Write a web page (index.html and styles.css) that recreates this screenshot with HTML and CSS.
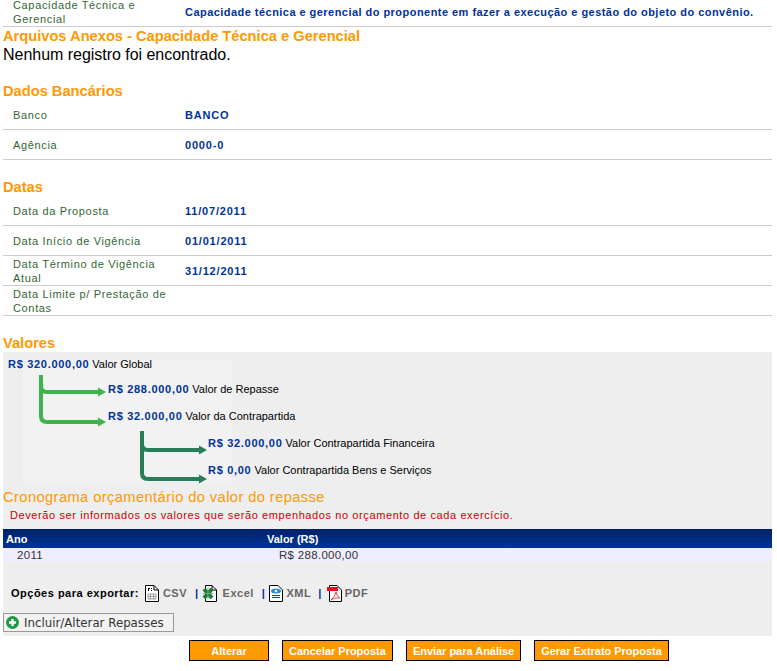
FILE: index.html
```html
<!DOCTYPE html>
<html lang="pt-BR">

<head>
  <meta charset="UTF-8">
  <title>Proposta</title>
  <link rel="stylesheet" href="styles.css">
</head>

<body>
  <div class="page">
    <div class="row row-first">
      <div class="label">Capacidade Técnica e Gerencial</div>
      <div class="value value-long">Capacidade técnica e gerencial do proponente em fazer a execução e gestão do objeto do convênio.</div>
    </div>
    <h3 class="title">Arquivos Anexos - Capacidade Técnica e Gerencial</h3>
    <p class="empty">Nenhum registro foi encontrado.</p>

    <h3 class="title title-bank">Dados Bancários</h3>
    <div class="row">
      <div class="label">Banco</div>
      <div class="value">BANCO</div>
    </div>
    <div class="row">
      <div class="label">Agência</div>
      <div class="value">0000-0</div>
    </div>

    <h3 class="title title-gap">Datas</h3>
    <div class="row">
      <div class="label">Data da Proposta</div>
      <div class="value">11/07/2011</div>
    </div>
    <div class="row">
      <div class="label">Data Início de Vigência</div>
      <div class="value">01/01/2011</div>
    </div>
    <div class="row">
      <div class="label">Data Término de Vigência Atual</div>
      <div class="value">31/12/2011</div>
    </div>
    <div class="row">
      <div class="label">Data Limite p/ Prestação de Contas</div>
      <div class="value"></div>
    </div>

    <h3 class="title title-gap">Valores</h3>
    <div class="panel">
      <div class="tree">
        <div class="tree-bg"></div>
        <svg class="tree-arrows" width="440" height="136" viewBox="0 0 440 136">
          <path d="M38 23V34Q38 40 44 40H96M38 34V64Q38 70 44 70H96" fill="none" stroke="#3cb44b" stroke-width="4"/>
          <path d="M95 35.500L103 40L95 44.500ZM95 65.500L103 70L95 74.500Z" fill="#3cb44b"/>
          <path d="M139 79V92Q139 98 145 98H196M139 92V121Q139 127 145 127H196" fill="none" stroke="#267f57" stroke-width="4"/>
          <path d="M196 93.500L204 98L196 102.500ZM196 122.500L204 127L196 131.500Z" fill="#267f57"/>
        </svg>
        <div class="amount level-0"><b>R$ 320.000,00</b> Valor Global</div>
        <div class="amount level-1"><b>R$ 288.000,00</b> Valor de Repasse</div>
        <div class="amount level-1"><b>R$ 32.000,00</b> Valor da Contrapartida</div>
        <div class="amount level-2"><b>R$ 32.000,00</b> Valor Contrapartida Financeira</div>
        <div class="amount level-2"><b>R$ 0,00</b> Valor Contrapartida Bens e Serviços</div>
      </div>

      <h3 class="title title-plan">Cronograma orçamentário do valor do repasse</h3>
      <p class="warning">Deverão ser informados os valores que serão empenhados no orçamento de cada exercício.</p>

      <table class="plan">
        <thead>
          <tr><th class="col-year">Ano</th><th>Valor (R$)</th></tr>
        </thead>
        <tbody>
          <tr><td class="cell-year">2011</td><td class="cell-value">R$ 288.000,00</td></tr>
        </tbody>
      </table>

      <div class="export">
        <b>Opções para exportar:</b>
        <svg class="file-icon" width="16" height="17" viewBox="0 0 16 17">
          <path d="M1.500.5H10L14.500 5V16.500H1.500Z" fill="#fff" stroke="#000"/>
          <path d="M10 .5V5H14.500" fill="none" stroke="#000"/>
          <path d="M4 9H12V14H4ZM6.500 9V14M9.500 9V14M4 11.500H12" fill="none" stroke="#999"/>
          <path d="M4 3H6V4H4ZM4 4H5V6H4ZM7 3H8V4H7ZM7 5H8V6H7Z" fill="#000"/>
        </svg>
        <a>CSV</a>
        <span class="sep">|</span>
        <svg class="file-icon" width="16" height="17" viewBox="0 0 16 17">
          <path d="M3.500.5H10L14.500 5V16.500H3.500Z" fill="#fff" stroke="#000"/>
          <path d="M10 .5V5H14.500" fill="none" stroke="#000"/>
          <path d="M2 4L10 13M10 4L2 13" fill="none" stroke="#1f7a3a" stroke-width="4"/>
          <path d="M1 8.500H11M6 2.500V14.500" fill="none" stroke="#6fae7f"/>
        </svg>
        <a class="excel">Excel</a>
        <span class="sep">|</span>
        <svg class="file-icon" width="16" height="17" viewBox="0 0 16 17">
          <path d="M1.500.5H10L14.500 5V16.500H1.500Z" fill="#fff" stroke="#000"/>
          <ellipse cx="8" cy="6" rx="5" ry="2.500" fill="#2a8ae0"/>
          <circle cx="8" cy="6" r="1.300" fill="#fff"/>
          <path d="M4 10.500H12M4 12.500H12" stroke="#1f3f9f"/>
        </svg>
        <a class="xml">XML</a>
        <span class="sep sep-pdf">|</span>
        <svg class="file-icon" width="16" height="17" viewBox="0 0 16 17">
          <path d="M3.500.5H11L15.500 5V16.500H3.500Z" fill="#fff" stroke="#000"/>
          <path d="M1 2H12V6H1Z" fill="#e0101a"/>
          <path d="M5 15Q9 12 10 7Q11 12 14 13Q9 12 5 15Z" fill="none" stroke="#e0454a"/>
        </svg>
        <a class="pdf">PDF</a>
      </div>

      <button class="include" type="button">
        <svg width="13" height="13" viewBox="0 0 13 13">
          <circle cx="6.500" cy="6.500" r="6.500" fill="#1f9a45"/>
          <path d="M6.500 3V10M3 6.500H10" stroke="#fff" stroke-width="2.400"/>
        </svg>
        Incluir/Alterar Repasses
      </button>
    </div>

    <div class="actions">
      <button class="btn btn-change" type="button">Alterar</button>
      <button class="btn" type="button">Cancelar Proposta</button>
      <button class="btn" type="button">Enviar para Análise</button>
      <button class="btn" type="button">Gerar Extrato Proposta</button>
    </div>
  </div>
</body>

</html>
```

FILE: styles.css
```css
html, body {
  margin: 0;
  height: 671px;
  overflow: hidden;
}
body {
  font-family: "Liberation Sans", Arial, sans-serif;
  background-color: #fff;
}
.page {
  width: 769px;
  margin-left: 3px;
}
.row {
  display: flex;
  align-items: center;
  height: 29px;
  border-bottom: 1px solid #ccc;
  font-size: 11px;
}
.row-first {
  margin-top: -3px;
}
.label {
  width: 182px;
  padding-left: 10px;
  box-sizing: border-box;
  color: #336633;
  line-height: 14px;
  letter-spacing: 0.65px;
}
.value {
  color: #003399;
  font-weight: bold;
  letter-spacing: 0.8px;
}
.value-long {
  letter-spacing: 0.46px;
}
.title {
  margin: 0;
  color: #ff9900;
  font-size: 14.670px;
  line-height: 19px;
  font-weight: bold;
}
.title-bank {
  margin-bottom: -1px;
}
.title-gap {
  margin-top: 18px;
  margin-bottom: -1px;
}
.empty {
  margin: 0 0 18px;
  font-size: 16px;
  line-height: 18px;
  letter-spacing: -0.03px;
}
.panel {
  height: 284px;
  background-color: #eee;
}
.tree {
  position: relative;
  height: 136px;
  padding-top: 5px;
  box-sizing: border-box;
}
.tree-bg {
  position: absolute;
  left: 20px;
  top: 8px;
  width: 209px;
  height: 123px;
  background-color: #f2f2f2;
}
.tree-arrows {
  position: absolute;
  left: 0;
  top: 0;
}
.amount {
  position: relative;
  height: 27px;
  font-size: 11px;
  line-height: 14px;
}
.amount b {
  color: #003399;
  letter-spacing: 0.7px;
}
.level-0 {
  padding-left: 5px;
  height: 25px;
}
.level-1 {
  padding-left: 105px;
}
.level-2 {
  padding-left: 205px;
}
.title-plan {
  font-weight: normal;
  letter-spacing: 0.42px;
}
.warning {
  margin: 1px 0 0 7px;
  color: #cc0000;
  font-size: 11px;
  letter-spacing: 0.6px;
  line-height: 14px;
}
.plan {
  width: 100%;
  margin-top: 7px;
  border-collapse: collapse;
  font-size: 11px;
}
.plan th {
  height: 19px;
  padding: 0 3px;
  text-align: left;
  color: #fff;
  background: linear-gradient(#002266, #003399);
}
.col-year {
  width: 255px;
}
.plan td {
  height: 14px;
  padding: 0;
  background-color: #eeeeff;
  color: #333;
  font-size: 11.500px;
  letter-spacing: 0.3px;
}
.cell-year {
  padding-left: 14px !important;
}
.cell-value {
  padding-left: 15px !important;
}
.export {
  display: flex;
  align-items: center;
  gap: 3px;
  margin: 21px 0 0 8px;
  height: 20px;
  font-size: 11px;
  letter-spacing: 0.5px;
}
.export b {
  margin-right: 2px;
}
.export a {
  color: #666;
  font-weight: bold;
  margin-right: 5px;
}
.export a.excel {
  margin-left: 2px;
}
.export a.xml {
  margin-left: -1px;
  margin-right: 4px;
}
.export a.pdf {
  margin-left: 0;
}
.sep {
  color: #003399;
  font-weight: bold;
}
.sep-pdf {
  margin-right: 1px;
}
.include {
  display: flex;
  align-items: center;
  gap: 5px;
  width: 171px;
  height: 19px;
  margin-top: 10px;
  padding: 0 2px;
  border: 1px solid #999;
  background-color: #f2f2f2;
  color: #333;
  font-family: "DejaVu Sans", sans-serif;
  font-size: 11.800px;
}
.actions {
  display: flex;
  gap: 13px;
  margin: 4px 0 0 186px;
}
.btn {
  height: 21px;
  padding: 0 6px;
  border: 1px solid #000;
  background-color: #ff9900;
  color: #fff;
  font-family: "Liberation Sans", Arial, sans-serif;
  font-size: 11px;
  font-weight: bold;
  letter-spacing: -0.02px;
}
.btn-change {
  width: 80px;
}
```
